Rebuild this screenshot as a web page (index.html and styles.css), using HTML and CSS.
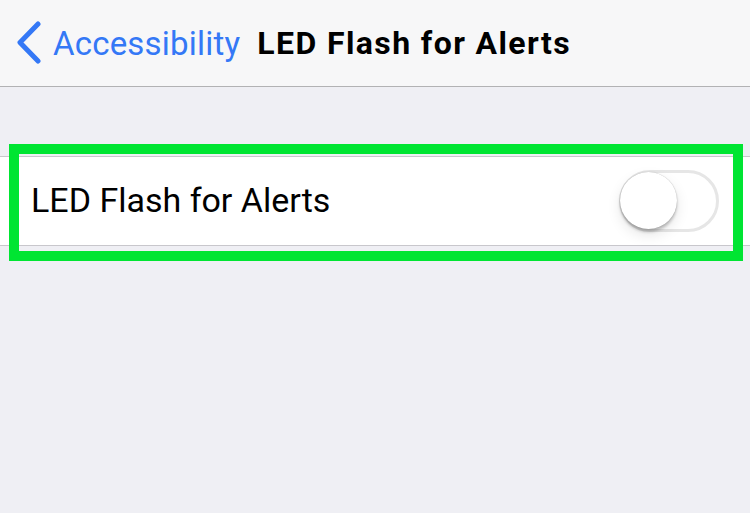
FILE: index.html
```html
<!DOCTYPE html>
<html>
<head>
<meta charset="utf-8">
<link rel="stylesheet" href="styles.css">
</head>
<body>
<div class="screen">
  <header class="nav">
    <div class="back">
      <svg class="chevron" width="28" height="44" viewBox="0 0 28 44">
        <polyline points="23,3 5,21.5 23,40" fill="none" stroke="#3478f6" stroke-width="5" stroke-linecap="round" stroke-linejoin="round"/>
      </svg>
      <span class="back-label">Accessibility</span>
    </div>
    <div class="title">LED Flash for Alerts</div>
  </header>
  <main class="content">
    <div class="group">
      <div class="cell">
        <span class="cell-label">LED Flash for Alerts</span>
        <div class="toggle"><div class="knob"></div></div>
      </div>
      <div class="highlight"></div>
    </div>
  </main>
</div>
</body>
</html>
```
FILE: styles.css
```css
html, body {
  margin: 0;
  padding: 0;
}
body {
  width: 750px;
  height: 513px;
  overflow: hidden;
  background: #efeff4;
  font-family: Roboto, "Liberation Sans", sans-serif;
}
.screen {
  width: 750px;
  height: 513px;
}
.nav {
  height: 86px;
  background: #f7f7f8;
  border-bottom: 1px solid #b2b2b4;
  display: flex;
  align-items: center;
  padding-left: 15px;
}
.back {
  display: flex;
  align-items: center;
  gap: 10px;
}
.chevron {
  display: block;
  margin-top: -1px;
}
.back-label {
  color: #3478f6;
  font-size: 33px;
  letter-spacing: 0.2px;
}
.title {
  margin-left: 17px;
  font-size: 32px;
  font-weight: 700;
  letter-spacing: 1.4px;
  color: #000;
}
.content {
  padding-top: 69px;
}
.group {
  position: relative;
}
.cell {
  height: 88px;
  background: #fff;
  border-top: 1px solid #c8c7cc;
  border-bottom: 1px solid #c8c7cc;
  display: flex;
  align-items: center;
  justify-content: space-between;
  padding: 0 31px 0 31px;
}
.cell-label {
  font-size: 34px;
  color: #000;
  margin-top: -3px;
}
.toggle {
  width: 94px;
  height: 56px;
  border: 3px solid #e6e6e6;
  border-radius: 31px;
  position: relative;
  background: #fff;
}
.knob {
  position: absolute;
  left: -2px;
  top: -1px;
  width: 57px;
  height: 57px;
  border-radius: 50%;
  background: #fff;
  box-shadow: 0 3px 3px rgba(0,0,0,0.22), 0 0 1px rgba(0,0,0,0.3), 0 6px 14px rgba(0,0,0,0.10);
}
.highlight {
  position: absolute;
  left: 9px;
  top: -12px;
  width: 714px;
  height: 97px;
  border: 10px solid #00e532;
  pointer-events: none;
}
```
